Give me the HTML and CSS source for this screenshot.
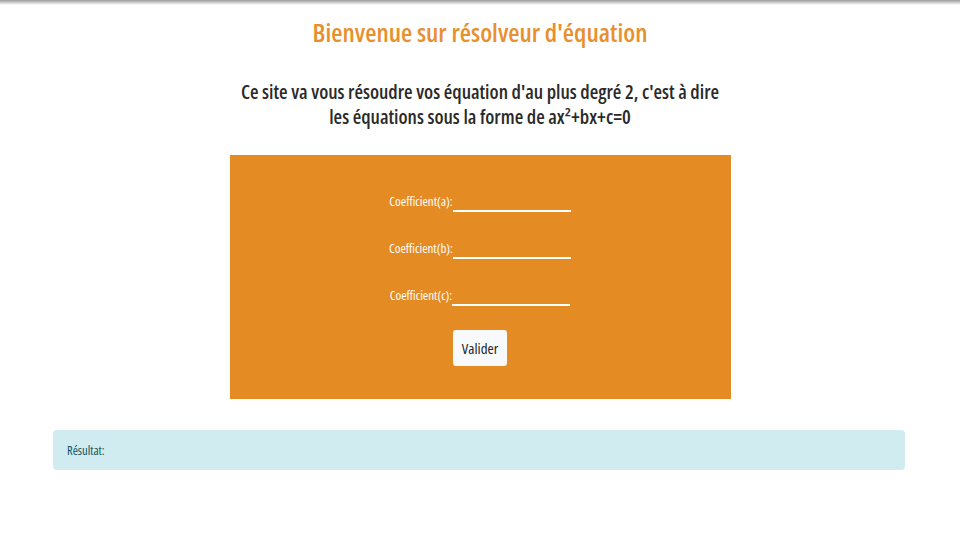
FILE: index.html
```html
<!DOCTYPE html>
<html lang="fr">
<head>
<meta charset="utf-8">
<title>Résolveur d'équation</title>
<link rel="stylesheet" href="styles.css">
</head>
<body>
<div class="topshade"></div>
<h1 class="title">Bienvenue sur résolveur d'équation</h1>
<p class="intro">Ce site va vous résoudre vos équation d'au plus degré 2, c'est à dire<br>les équations sous la forme de ax²+bx+c=0</p>
<form class="panel">
  <div class="row"><label class="lbl">Coefficient(a):</label><input class="field" type="text"></div>
  <div class="row"><label class="lbl">Coefficient(b):</label><input class="field" type="text"></div>
  <div class="row"><label class="lbl">Coefficient(c):</label><input class="field" type="text"></div>
  <button class="btn" type="button">Valider</button>
</form>
<div class="result">Résultat:</div>
</body>
</html>
```
FILE: styles.css
```css
html, body { margin: 0; padding: 0; background: #fff; }
body { font-family: "Open Sans", "Noto Sans", sans-serif; font-stretch: 75%; color: #222; }
.topshade { height: 5px; background: linear-gradient(#9a9a9a, #fff); }
.title { margin: 12px 0 0; text-align: center; font-size: 25.8px; line-height: 30px; font-weight: 600; color: #e8902e; }
.intro { margin: 32px 0 0; text-align: center; font-size: 19.6px; line-height: 25px; font-weight: 600; color: #2a2a2a; }
.panel { width: 501px; height: 244px; margin: 26px auto 0; background: #e48b23; box-sizing: border-box; padding-top: 31px; display: flex; flex-direction: column; align-items: center; }
.row { display: flex; align-items: flex-end; height: 26px; margin-bottom: 21px; }
.lbl { color: #fff; font-size: 13px; line-height: 14px; padding-bottom: 4px; }
.field { width: 118px; height: 20px; border: 0; border-bottom: 2px solid #fff; background: transparent; padding: 0; outline: none; }
.btn { margin-top: 3px; width: 54px; height: 36px; border: 0; border-radius: 3px; background: #f8f9fa; color: #212529; font-family: inherit; font-stretch: 75%; font-size: 15px; padding: 0; }
.result { margin: 31px 55px 0 53px; height: 40px; box-sizing: border-box; padding: 0 14px; display: flex; align-items: center; background: #d1ecf1; border-radius: 4px; color: #0c5460; font-size: 12.5px; }
```
